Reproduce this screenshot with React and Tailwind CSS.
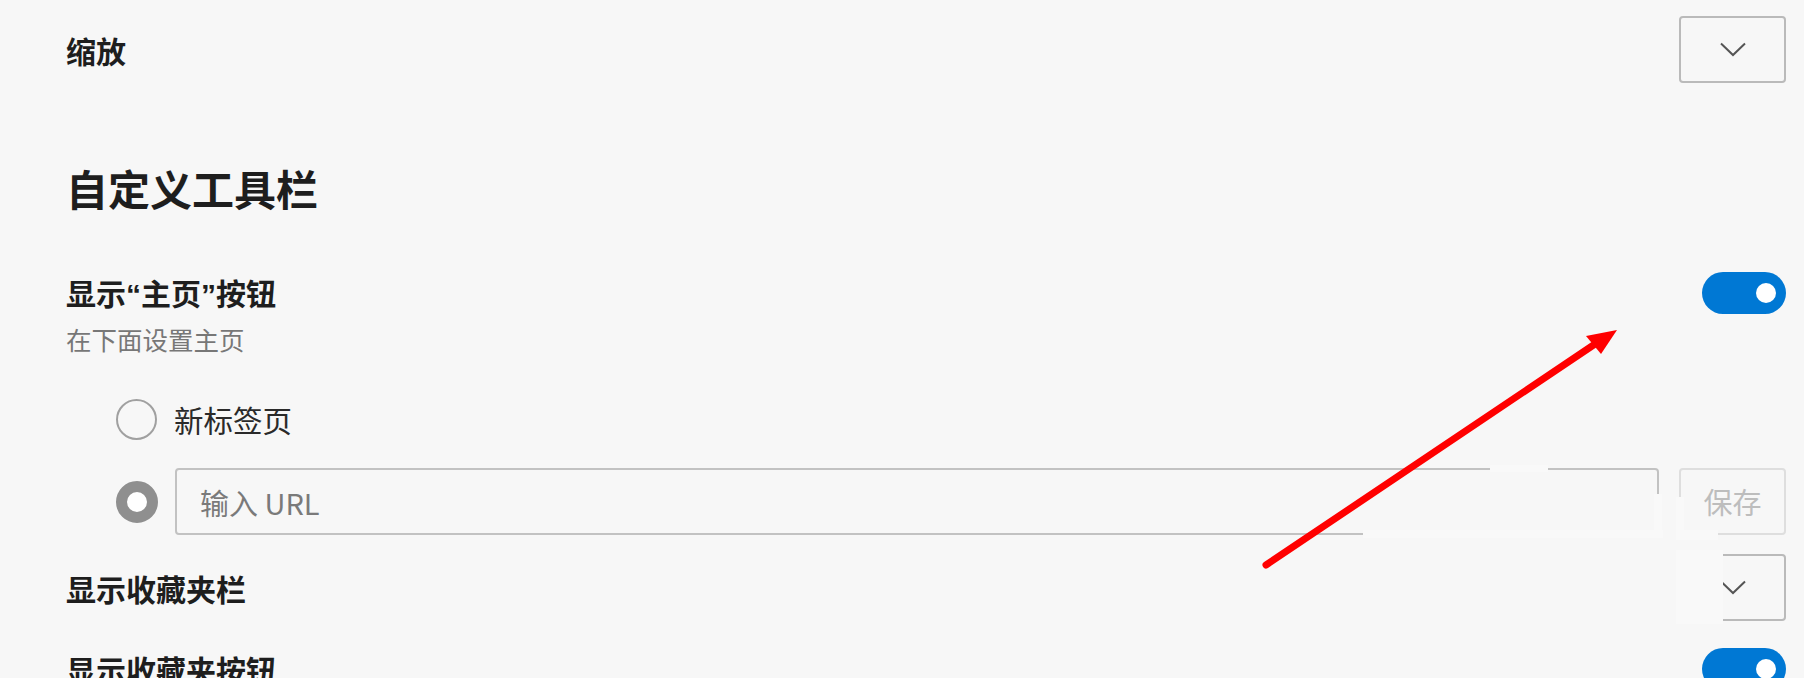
import React, { useState } from 'react';

const font = "font-['Microsoft_YaHei','Noto_Sans_CJK_SC','Noto_Sans',sans-serif]";

function Chevron() {
  return (
    <svg width="26" height="15" viewBox="0 0 26 15" fill="none">
      <polyline points="1,1.5 13,13 25,1.5" stroke="#555" strokeWidth="2" />
    </svg>
  );
}

function Dropdown() {
  return (
    <button className="w-[107px] h-[67px] border-2 border-[#bababa] rounded-[4px] flex items-center justify-center bg-transparent">
      <Chevron />
    </button>
  );
}

function Toggle({ on }) {
  return (
    <div className={`w-[84px] h-[42px] rounded-full flex items-center pr-[10px] justify-end ${on ? 'bg-[#0078d4]' : 'bg-gray-300'}`}>
      <span className="w-[20px] h-[20px] rounded-full bg-white" />
    </div>
  );
}

// Latin quotes are narrower than the CJK full-width ones
const Q = ({ children }) => <span className="font-['Liberation_Sans',sans-serif]">{children}</span>;

export default function App() {
  const [homeBtn, setHomeBtn] = useState(true);
  const [url, setUrl] = useState('');

  return (
    <div className={`relative h-[678px] overflow-hidden bg-[#f7f7f7] text-[#1e1e1e] pl-[66px] pr-[18px] ${font}`}>
      {/* zoom */}
      <div className="mt-[16px] h-[67px] flex items-center justify-between">
        <span className="text-[30px] leading-[30px] font-semibold">缩放</span>
        <Dropdown />
      </div>

      {/* toolbar section */}
      <h2 className="mt-[84px] h-[42px] text-[42px] leading-[42px] font-bold">自定义工具栏</h2>

      <div className="mt-[63px] h-[42px] flex items-center justify-between" onClick={() => setHomeBtn(!homeBtn)}>
        <span className="text-[30px] leading-[30px] font-semibold">显示<Q>“</Q>主页<Q>”</Q>按钮</span>
        <Toggle on={homeBtn} />
      </div>
      <div className="mt-[12px] h-[26px] text-[25.5px] leading-[26px] text-[#777]">在下面设置主页</div>

      <div className="mt-[46px] h-[42px] pl-[50px] flex items-center gap-[17px]">
        <span className="w-[41px] h-[41px] rounded-full border-2 border-[#a0a0a0]" />
        <span className="text-[29.5px] leading-[30px] text-[#2a2a2a]">新标签页</span>
      </div>

      <div className="mt-[28px] h-[67px] pl-[50px] flex items-center">
        <span className="w-[42px] h-[42px] rounded-full border-[11px] border-[#8f8f8f] bg-white shrink-0" />
        <input
          value={url}
          onChange={(e) => setUrl(e.target.value)}
          placeholder="输入 URL"
          className="ml-[17px] flex-1 h-[67px] border-2 border-[#c2c2c2] rounded-[4px] bg-transparent px-[23px] text-[29px] text-[#333] placeholder-[#7a7a7a] outline-none"
        />
        <button className="ml-[20px] w-[107px] h-[67px] border-2 border-[#dedede] rounded-[4px] text-[29px] text-[#bdbdbd] bg-transparent">保存</button>
      </div>

      <div className="mt-[19px] h-[67px] flex items-center justify-between">
        <span className="text-[30px] leading-[30px] font-semibold">显示收藏夹栏</span>
        <Dropdown />
      </div>

      <div className="mt-[27px] h-[42px] flex items-center justify-between">
        <span className="text-[30px] leading-[30px] font-semibold">显示收藏夹按钮</span>
        <Toggle on />
      </div>

      {/* faint watermark patches */}
      <div className="absolute left-[1490px] top-[465px] w-[58px] h-[7px] bg-[#f9f9f9]" />
      <div className="absolute left-[1363px] top-[530px] w-[300px] h-[8px] bg-[#f9f9f9]" />
      <div className="absolute left-[1654px] top-[494px] w-[8px] h-[44px] bg-[#f9f9f9]" />
      <div className="absolute left-[1676px] top-[497px] w-[8px] h-[42px] bg-[#f9f9f9]" />
      <div className="absolute left-[1676px] top-[530px] w-[42px] h-[10px] bg-[#f9f9f9]" />
      <div className="absolute left-[1676px] top-[550px] w-[47px] h-[74px] bg-[#f9f9f9]" />

      {/* red annotation arrow */}
      <svg className="absolute left-0 top-0 pointer-events-none" width="1804" height="678">
        <line x1="1266" y1="565" x2="1598" y2="342" stroke="#ff0000" strokeWidth="7" strokeLinecap="round" />
        <polygon points="1617,330 1586,336 1601,354" fill="#ff0000" />
      </svg>
    </div>
  );
}
